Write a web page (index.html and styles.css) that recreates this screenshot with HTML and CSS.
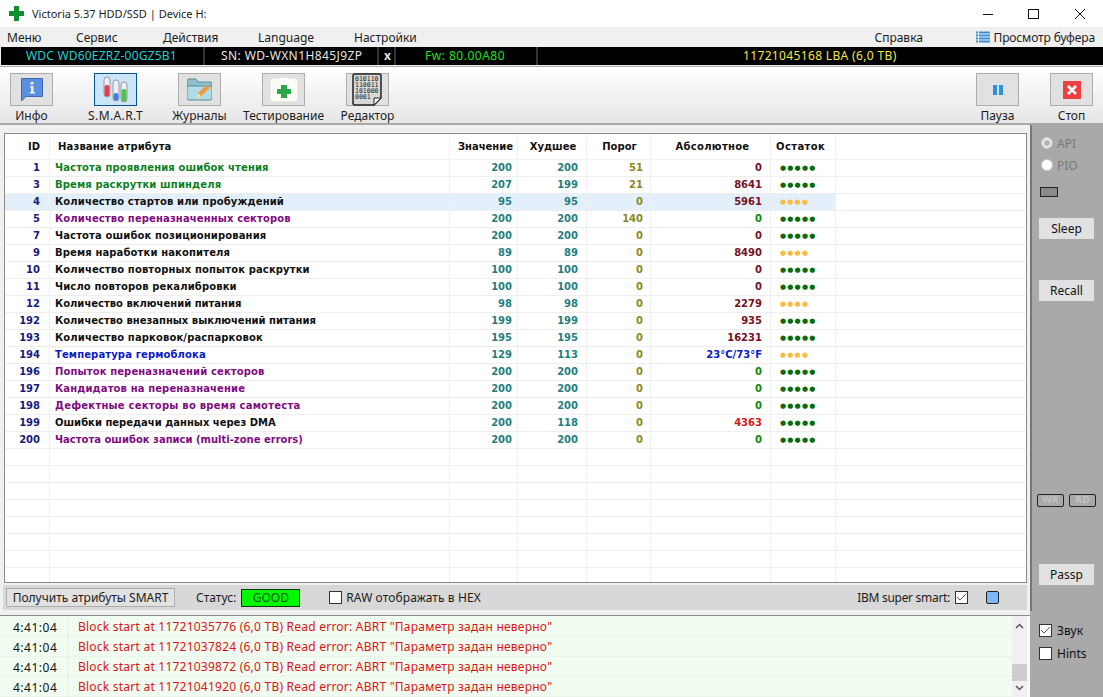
FILE: index.html
```html
<!DOCTYPE html>
<html lang="ru">
<head>
<meta charset="utf-8">
<title>Victoria 5.37</title>
<link rel="stylesheet" href="styles.css">
</head>
<body>
<div class="app">
  <header class="titlebar">
    <svg class="logo" width="15" height="15" viewBox="0 0 15 15"><path d="M5 0h5v5h5v5h-5v5H5v-5H0V5h5z" fill="#0f8f2c"/></svg>
    <span class="title">Victoria 5.37 HDD/SSD | Device H:</span>
    <div class="winbtns">
      <svg width="12" height="12" viewBox="0 0 12 12"><path d="M1 6.5h10" stroke="#111"/></svg>
      <svg width="12" height="12" viewBox="0 0 12 12"><rect x=".5" y="1.5" width="10" height="9" fill="none" stroke="#111"/></svg>
      <svg width="12" height="12" viewBox="0 0 12 12"><path d="M1 1l10 10M11 1L1 11" stroke="#111" fill="none"/></svg>
    </div>
  </header>
  <nav class="menubar">
    <span class="m1">Меню</span><span class="m2">Сервис</span><span class="m3">Действия</span><span class="m4">Language</span><span class="m5">Настройки</span>
    <span class="m6">Справка</span>
    <span class="m7"><svg width="14" height="13" viewBox="0 0 14 13"><path d="M0 1.5h2M3 1.5h11M0 4.5h2M3 4.5h11M0 7.5h2M3 7.5h11M0 10.5h2M3 10.5h11" stroke="#3a8fd8" stroke-width="2"/></svg>Просмотр буфера</span>
  </nav>
  <div class="infobar">
    <span class="i-model">WDC WD60EZRZ-00GZ5B1</span>
    <span class="i-sn">SN: WD-WXN1H845J9ZP</span>
    <span class="i-x">x</span>
    <span class="i-fw">Fw: 80.00A80</span>
    <span class="i-lba">11721045168 LBA (6,0 TB)</span>
  </div>
  <div class="toolbar">
    <div class="tool"><div class="tbtn">
      <svg width="22" height="24" viewBox="0 0 22 24"><path d="M.5.5h21v18H5l-4.500 4.500z" fill="#5b8ede" stroke="#3f6cb4"/><rect x="9.500" y="4" width="3" height="2.500" fill="#e8f0ff"/><path d="M9 8h3.500v6H14v1.500H9V14h1V9.500H9z" fill="#e8f0ff"/></svg>
    </div><span>Инфо</span></div>
    <div class="tool"><div class="tbtn active">
      <svg width="25" height="27" viewBox="0 0 25 27"><rect x="1" y="1" width="6" height="20" rx="3" fill="#eef" stroke="#999"/><rect x="1.500" y="9" width="5" height="11.500" rx="2.500" fill="#e0404a"/><rect x="10" y="4" width="6" height="21" rx="3" fill="#eef" stroke="#999"/><rect x="10.500" y="17" width="5" height="7.500" rx="2.500" fill="#3a80d8"/><rect x="18" y="6" width="6" height="20" rx="3" fill="#eef" stroke="#999"/><rect x="18.500" y="13" width="5" height="12.500" rx="2.500" fill="#50c050"/></svg>
    </div><span class="sp">S.M.A.R.T</span></div>
    <div class="tool"><div class="tbtn">
      <svg width="25" height="24" viewBox="0 0 25 24"><path d="M0 3q0-2 2-2h7l2 3h12q2 0 2 2v3H0z" fill="#8cc0cc" stroke="#5a8a98"/><path d="M0 8h25v12q0 2-2 2H2q-2 0-2-2z" fill="#b0dce6" stroke="#5a8a98"/><path d="M9 21l2-6 9-8 3 3-9 8z" fill="#f09a3a"/><path d="M9 21l2-6 3 3z" fill="#f8e0b0"/></svg>
    </div><span>Журналы</span></div>
    <div class="tool"><div class="tbtn">
      <svg width="32" height="27" viewBox="0 0 32 27"><path d="M2 4q0-2 2-2h8v-1h8v1h8q2 0 2 2v20q0 2-2 2H4q-2 0-2-2z" fill="#fbfbf8" stroke="#dcdcd6"/><path d="M13 9h6v4h4v5h-4v4h-6v-4H9v-5h4z" fill="#2aa84a"/></svg>
    </div><span>Тестирование</span></div>
    <div class="tool"><div class="tbtn">
      <svg width="34" height="33" viewBox="0 0 34 33"><path d="M4 1h24q2 0 2 2v22l-7 7H4q-2 0-2-2V3q0-2 2-2z" fill="#d8d8d8" stroke="#222" stroke-width="1.500"/><path d="M30 25h-7v7z" fill="#f4f4f4" stroke="#222"/><text x="4" y="8" class="bin">010110</text><text x="4" y="14" class="bin">110011</text><text x="4" y="20" class="bin">101000</text><text x="4" y="26" class="bin">0001</text></svg>
    </div><span>Редактор</span></div>
    <div class="tool tool-pause"><div class="tbtn">
      <svg width="12" height="12" viewBox="0 0 12 12"><path d="M1 1h4v10H1zM7 1h4v10H7z" fill="#2f92e0"/></svg>
    </div><span>Пауза</span></div>
    <div class="tool"><div class="tbtn">
      <svg width="18" height="18" viewBox="0 0 18 18"><rect width="18" height="18" fill="#ee4040"/><path d="M5 5l8 8M13 5l-8 8" stroke="#fff" stroke-width="2.500"/></svg>
    </div><span>Стоп</span></div>
  </div>
  <div class="work">
    <main class="left">
      <div class="table">
        <div class="row head">
          <div class="c-id">ID</div><div class="c-name">Название атрибута</div><div class="c-v">Значение</div><div class="c-w">Худшее</div><div class="c-t">Порог</div><div class="c-a">Абсолютное</div><div class="c-d">Остаток</div><div></div>
        </div>
        <div class="row"><div class="c-id">1</div><div class="c-name green">Частота проявления ошибок чтения</div><div class="c-v">200</div><div class="c-w">200</div><div class="c-t">51</div><div class="c-a">0</div><div class="c-d">●●●●●</div><div></div></div>
        <div class="row"><div class="c-id">3</div><div class="c-name green">Время раскрутки шпинделя</div><div class="c-v">207</div><div class="c-w">199</div><div class="c-t">21</div><div class="c-a">8641</div><div class="c-d">●●●●●</div><div></div></div>
        <div class="row sel"><div class="c-id">4</div><div class="c-name">Количество стартов или пробуждений</div><div class="c-v">95</div><div class="c-w">95</div><div class="c-t">0</div><div class="c-a">5961</div><div class="c-d warn">●●●●</div><div></div></div>
        <div class="row"><div class="c-id">5</div><div class="c-name purple">Количество переназначенных секторов</div><div class="c-v">200</div><div class="c-w">200</div><div class="c-t">140</div><div class="c-a ok">0</div><div class="c-d">●●●●●</div><div></div></div>
        <div class="row"><div class="c-id">7</div><div class="c-name">Частота ошибок позиционирования</div><div class="c-v">200</div><div class="c-w">200</div><div class="c-t">0</div><div class="c-a">0</div><div class="c-d">●●●●●</div><div></div></div>
        <div class="row"><div class="c-id">9</div><div class="c-name">Время наработки накопителя</div><div class="c-v">89</div><div class="c-w">89</div><div class="c-t">0</div><div class="c-a">8490</div><div class="c-d warn">●●●●</div><div></div></div>
        <div class="row"><div class="c-id">10</div><div class="c-name">Количество повторных попыток раскрутки</div><div class="c-v">100</div><div class="c-w">100</div><div class="c-t">0</div><div class="c-a">0</div><div class="c-d">●●●●●</div><div></div></div>
        <div class="row"><div class="c-id">11</div><div class="c-name">Число повторов рекалибровки</div><div class="c-v">100</div><div class="c-w">100</div><div class="c-t">0</div><div class="c-a">0</div><div class="c-d">●●●●●</div><div></div></div>
        <div class="row"><div class="c-id">12</div><div class="c-name tight">Количество включений питания</div><div class="c-v">98</div><div class="c-w">98</div><div class="c-t">0</div><div class="c-a">2279</div><div class="c-d warn">●●●●</div><div></div></div>
        <div class="row"><div class="c-id">192</div><div class="c-name tight">Количество внезапных выключений питания</div><div class="c-v">199</div><div class="c-w">199</div><div class="c-t">0</div><div class="c-a">935</div><div class="c-d">●●●●●</div><div></div></div>
        <div class="row"><div class="c-id">193</div><div class="c-name">Количество парковок/распарковок</div><div class="c-v">195</div><div class="c-w">195</div><div class="c-t">0</div><div class="c-a">16231</div><div class="c-d">●●●●●</div><div></div></div>
        <div class="row"><div class="c-id">194</div><div class="c-name blue">Температура гермоблока</div><div class="c-v">129</div><div class="c-w">113</div><div class="c-t">0</div><div class="c-a blue">23°C/73°F</div><div class="c-d warn">●●●●</div><div></div></div>
        <div class="row"><div class="c-id">196</div><div class="c-name purple">Попыток переназначений секторов</div><div class="c-v">200</div><div class="c-w">200</div><div class="c-t">0</div><div class="c-a ok">0</div><div class="c-d">●●●●●</div><div></div></div>
        <div class="row"><div class="c-id">197</div><div class="c-name purple">Кандидатов на переназначение</div><div class="c-v">200</div><div class="c-w">200</div><div class="c-t">0</div><div class="c-a ok">0</div><div class="c-d">●●●●●</div><div></div></div>
        <div class="row"><div class="c-id">198</div><div class="c-name purple wide">Дефектные секторы во время самотеста</div><div class="c-v">200</div><div class="c-w">200</div><div class="c-t">0</div><div class="c-a ok">0</div><div class="c-d">●●●●●</div><div></div></div>
        <div class="row"><div class="c-id">199</div><div class="c-name tight">Ошибки передачи данных через DMA</div><div class="c-v">200</div><div class="c-w">118</div><div class="c-t">0</div><div class="c-a bad">4363</div><div class="c-d">●●●●●</div><div></div></div>
        <div class="row"><div class="c-id">200</div><div class="c-name purple tight">Частота ошибок записи (multi-zone errors)</div><div class="c-v">200</div><div class="c-w">200</div><div class="c-t">0</div><div class="c-a ok">0</div><div class="c-d">●●●●●</div><div></div></div>
        <div class="row"><div class="c-id"></div><div class="c-name"></div><div class="c-v"></div><div class="c-w"></div><div class="c-t"></div><div class="c-a"></div><div class="c-d"></div><div></div></div>
        <div class="row"><div class="c-id"></div><div class="c-name"></div><div class="c-v"></div><div class="c-w"></div><div class="c-t"></div><div class="c-a"></div><div class="c-d"></div><div></div></div>
        <div class="row"><div class="c-id"></div><div class="c-name"></div><div class="c-v"></div><div class="c-w"></div><div class="c-t"></div><div class="c-a"></div><div class="c-d"></div><div></div></div>
        <div class="row"><div class="c-id"></div><div class="c-name"></div><div class="c-v"></div><div class="c-w"></div><div class="c-t"></div><div class="c-a"></div><div class="c-d"></div><div></div></div>
        <div class="row"><div class="c-id"></div><div class="c-name"></div><div class="c-v"></div><div class="c-w"></div><div class="c-t"></div><div class="c-a"></div><div class="c-d"></div><div></div></div>
        <div class="row"><div class="c-id"></div><div class="c-name"></div><div class="c-v"></div><div class="c-w"></div><div class="c-t"></div><div class="c-a"></div><div class="c-d"></div><div></div></div>
        <div class="row"><div class="c-id"></div><div class="c-name"></div><div class="c-v"></div><div class="c-w"></div><div class="c-t"></div><div class="c-a"></div><div class="c-d"></div><div></div></div>
        <div class="row"><div class="c-id"></div><div class="c-name"></div><div class="c-v"></div><div class="c-w"></div><div class="c-t"></div><div class="c-a"></div><div class="c-d"></div><div></div></div>
      </div>
      <div class="statusbar">
        <button class="getbtn">Получить атрибуты SMART</button>
        <span class="st-label">Статус:</span>
        <span class="good">GOOD</span>
        <span class="cb raw"></span>
        <span class="rawtxt">RAW отображать в HEX</span>
        <span class="ibm">IBM super smart:</span>
        <span class="cb"><svg width="11" height="9" viewBox="0 0 11 9"><path d="M1 4l3 3 6-6" fill="none" stroke="#555"/></svg></span>
        <span class="bluebox"></span>
      </div>
    </main>
    <aside class="side">
      <label class="radio dis"><i class="r filled"></i>API</label>
      <label class="radio dis"><i class="r"></i>PIO</label>
      <div class="led"></div>
      <button class="sbtn sleep">Sleep</button>
      <button class="sbtn recall">Recall</button>
      <div class="wrrd"><span>WR</span><span>RD</span></div>
      <button class="sbtn passp">Passp</button>
    </aside>
  </div>
  <div class="bottom">
    <div class="log">
      <div class="lines">
        <div class="line"><span class="time">4:41:04</span><span class="msg">Block start at 11721035776 (6,0 TB) Read error: ABRT "Параметр задан неверно"</span></div>
        <div class="line"><span class="time">4:41:04</span><span class="msg">Block start at 11721037824 (6,0 TB) Read error: ABRT "Параметр задан неверно"</span></div>
        <div class="line"><span class="time">4:41:04</span><span class="msg">Block start at 11721039872 (6,0 TB) Read error: ABRT "Параметр задан неверно"</span></div>
        <div class="line"><span class="time">4:41:04</span><span class="msg">Block start at 11721041920 (6,0 TB) Read error: ABRT "Параметр задан неверно"</span></div>
      </div>
      <div class="scroll">
        <svg width="15" height="8" viewBox="0 0 15 8"><path d="M4 6l3.500-3.500L11 6" fill="none" stroke="#555" stroke-width="1.500"/></svg>
        <div class="thumb"></div>
        <svg width="15" height="8" viewBox="0 0 15 8"><path d="M4 2l3.500 3.500L11 2" fill="none" stroke="#555" stroke-width="1.500"/></svg>
      </div>
    </div>
    <div class="opts">
      <label class="opt"><span class="cb"><svg width="11" height="9" viewBox="0 0 11 9"><path d="M1 4l3 3 6-6" fill="none" stroke="#555"/></svg></span>Звук</label>
      <label class="opt"><span class="cb"></span>Hints</label>
    </div>
  </div>
</div>
</body>
</html>
```
FILE: styles.css
```css
* { box-sizing: border-box; }
html, body { margin: 0; padding: 0; }
body { width: 1103px; height: 697px; overflow: hidden; background: #f0f0f0; font-family: "Noto Sans", "Liberation Sans", sans-serif; font-size: 12px; color: #1c1c1c; }
.app { width: 1103px; height: 697px; display: flex; flex-direction: column; overflow: hidden; }

.titlebar { height: 27px; background: #fff; display: flex; align-items: center; padding-left: 9px; flex: none; }
.title { margin-left: 8px; font-size: 11px; color: #222; }
.winbtns { margin-left: auto; display: flex; gap: 34px; padding-right: 17px; }
.winbtns svg { display: block; }

.menubar { height: 20px; flex: none; background: #f0f0f0; display: flex; align-items: center; padding-left: 7px; }
.m1 { width: 69px; } .m2 { width: 87px; } .m3 { width: 95px; } .m4 { width: 96px; }
.m6 { margin-left: auto; width: 102px; }
.m7 { display: flex; align-items: center; gap: 3px; padding-right: 8px; letter-spacing: -.12px; }

.infobar { height: 18px; flex: none; margin-left: 1px; background: #000; display: flex; align-items: center; font-size: 12px; line-height: 18px; }
.infobar span { height: 18px; display: block; border-right: 2px solid #333; white-space: nowrap; }
.i-model { width: 204px; color: #22cfd0; padding-left: 25px; letter-spacing: .2px; }
.i-sn { width: 174px; color: #e6e6e6; padding-left: 16px; letter-spacing: .4px; }
.i-x { width: 17px; color: #ddd; font-weight: bold; padding-left: 5px; }
.i-fw { width: 142px; color: #1fe01f; padding-left: 29px; letter-spacing: .5px; }
.infobar .i-lba { flex: 1; color: #f0e840; border: 0; padding-left: 205px; letter-spacing: .35px; }

.toolbar { height: 59px; flex: none; margin-top: 1px; border-top: 1px solid #a9a9a9; border-bottom: 2px solid #a9a9a9; background: linear-gradient(#fff, #e6e6e6); display: flex; gap: 21px; padding-top: 6px; }
.tool { width: 63px; display: flex; flex-direction: column; align-items: center; gap: 1px; }
.tool span { white-space: nowrap; line-height: 17px; }
.tool-pause { margin-left: auto; margin-right: -10px; }
.tbtn { width: 43px; height: 33px; background: #e1e1e1; border: 1px solid #adadad; display: flex; align-items: center; justify-content: center; flex: none; }
.tbtn.active { background: #cce4f7; border-color: #005499; }
.sp { letter-spacing: .4px; }
.bin { font: 6.500px "DejaVu Sans Mono", monospace; fill: #222; }

.work { height: 486px; flex: none; display: flex; }
.left { width: 1030px; flex: none; display: flex; flex-direction: column; padding: 8px 3px 0 4px; background: #f0f0f0; }
.table { height: 450px; flex: none; background: #fff; border: 1px solid #8a8a8a; overflow: hidden; font-family: "DejaVu Sans", sans-serif; font-weight: bold; font-size: 10px; }
.row { display: grid; grid-template-columns: 45px 400px 68px 69px 64px 120px 65px 1fr; height: 17px; line-height: 16px; border-bottom: 1px solid #eeeeee; }
.row > div { border-right: 1px solid #f0f0f0; white-space: nowrap; overflow: hidden; }
.row > div:last-child { border-right: 0; }
.row.head { height: 26px; line-height: 25px; border-bottom: 1px solid #f2f2f2; color: #111; }
.row.sel > div { background: #e3f0fb; }
.row.sel > div:last-child { background: #fff; }
.c-id { text-align: right; padding-right: 9px; color: #1a1a80; }
.c-name { padding-left: 5px; color: #111; letter-spacing: .13px; }
.c-name.tight { letter-spacing: 0; }
.c-name.wide { letter-spacing: .24px; }
.c-v { text-align: right; padding-right: 5px; color: #1f7f7f; }
.c-w { text-align: right; padding-right: 8px; color: #1f7f7f; }
.c-t { text-align: right; padding-right: 7px; color: #8a8a20; }
.c-a { text-align: right; padding-right: 8px; color: #75101c; }
.c-d { padding-left: 9px; color: #0a6a0a; font-size: 7px; letter-spacing: 1.2px; font-weight: normal; }
.c-d.warn { color: #f8bc40; }
.c-name.green { color: #0d7f1f; }
.c-name.purple { color: #800c80; }
.c-name.blue, .c-a.blue { color: #0a1ac8; }
.c-a.ok { color: #0a8a0a; }
.c-a.bad { color: #d81818; }
.head > div { color: #111; font-size: 10px; letter-spacing: 0; }
.head .c-id { text-align: right; padding-right: 9px; }
.head .c-name { padding-left: 8px; letter-spacing: .15px; }
.head .c-v, .head .c-w, .head .c-t, .head .c-a { text-align: center; padding: 0; }
.head .c-v { padding-left: 4px; }
.head .c-w, .head .c-t { padding-left: 2px; }
.head .c-a { letter-spacing: .3px; padding-left: 4px; }
.head .c-d { font-size: 10px; font-weight: bold; padding-left: 5px; letter-spacing: .4px; }

.statusbar { height: 25px; margin-top: 2px; margin-left: -1px; flex: none; background: #d8d8d8; display: flex; align-items: center; padding-left: 3px; }
.getbtn { width: 169px; height: 19px; padding: 0; background: #e1e1e1; border: 1px solid #adadad; font: 12px "Noto Sans", sans-serif; color: #1c1c1c; }
.st-label { margin-left: 21px; }
.good { width: 59px; height: 18px; margin-left: 5px; background: #00f800; border: 1px solid #0a3a0a; text-align: center; line-height: 16px; color: #0a5a0a; }
.cb { width: 13px; height: 13px; background: #fff; border: 1px solid #333; display: inline-flex; align-items: center; justify-content: center; flex: none; }
.raw { margin: 0 4px 0 29px; }
.rawtxt { letter-spacing: .1px; }
.ibm { margin-left: auto; margin-right: 5px; letter-spacing: -.3px; }
.bluebox { width: 13px; height: 13px; margin: 0 28px 0 18px; background: #80b8ff; border: 1px solid #222; border-radius: 2px; flex: none; }

.side { width: 73px; flex: none; background: #a9a9a9; border-left: 2px solid #777; display: flex; flex-direction: column; padding: 7px 0 0 6px; }
.radio { display: flex; align-items: center; gap: 4px; height: 22px; margin-left: 3px; color: #7a7a7a; font-size: 12px; }
.r { width: 12px; height: 12px; border-radius: 50%; background: #fff; border: 1px solid #c8c8c8; display: block; }
.r.filled { background: #b4b4b4; box-shadow: inset 0 0 0 2px #f0f0f0; }
.led { width: 18px; height: 10px; margin: 11px 0 0 2px; background: #8a8a8a; border: 1px solid #222; }
.sbtn { display: block; width: 55px; height: 21px; padding: 0; background: #e1e1e1; border: 0; font: 12px "Noto Sans", sans-serif; color: #111; margin-left: 1px; }
.sleep { margin-top: 21px; }
.recall { margin-top: 41px; }
.wrrd { display: flex; gap: 5px; margin-top: 193px; margin-left: -1px; }
.wrrd span { width: 27px; height: 13px; border: 1px solid #222; border-radius: 2px; font: bold 9px/11px "DejaVu Sans", sans-serif; text-align: center; color: #c0c0c0; }
.passp { margin-top: 57px; }

.bottom { flex: 1; display: flex; padding-top: 3px; min-height: 0; }
.log { width: 1030px; flex: none; margin-top: 1px; border-top: 1px solid #8a8a8a; background: #f2fdf2; display: flex; overflow: hidden; }
.lines { width: 1012px; flex: none; padding-top: 1px; }
.line { height: 20px; display: flex; align-items: center; border-bottom: 1px solid #e8f5e8; font-size: 12px; }
.time { width: 69px; flex: none; height: 20px; line-height: 21px; padding-left: 13px; border-right: 1px solid #e4f0e4; color: #111; letter-spacing: .5px; }
.msg { padding-left: 9px; line-height: 21px; color: #dc1414; white-space: nowrap; letter-spacing: .23px; }
.scroll { width: 15px; flex: none; background: #f0f0f0; display: flex; flex-direction: column; padding-top: 6px; }
.scroll svg { display: block; flex: none; }
.thumb { height: 17px; margin-top: 34px; background: #cdcdcd; }
.scroll .thumb + svg { margin-top: 3px; }
.opts { width: 73px; flex: none; margin-top: -3px; background: #a9a9a9; padding: 13px 0 0 9px; display: flex; flex-direction: column; gap: 10px; }
.opt { display: flex; align-items: center; gap: 5px; height: 13px; color: #111; }
```
